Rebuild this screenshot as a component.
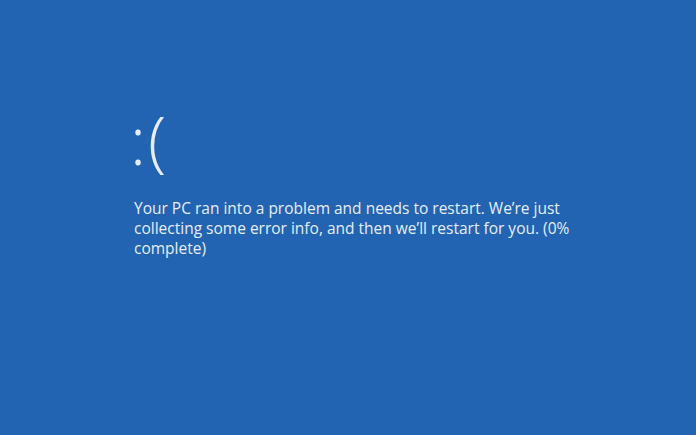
export default function App() {
  return (
    <main className="h-[435px] w-[696px] overflow-hidden bg-[#2264b1] text-[#e6edf7]" style={{ fontFamily: '"Open Sans", "Noto Sans", sans-serif' }}>
      <div className="pl-[134px] pt-[99px]">
        <p className="-ml-[4px] text-[67px] font-light leading-[80px] tracking-[2px]">:(</p>
        <p className="mt-[19px] w-[448px] text-[15.5px] leading-[20px]">
          Your PC ran into a problem and needs to restart. We’re just collecting some error info, and then we’ll restart for you. (0% complete)
        </p>
      </div>
    </main>
  )
}
